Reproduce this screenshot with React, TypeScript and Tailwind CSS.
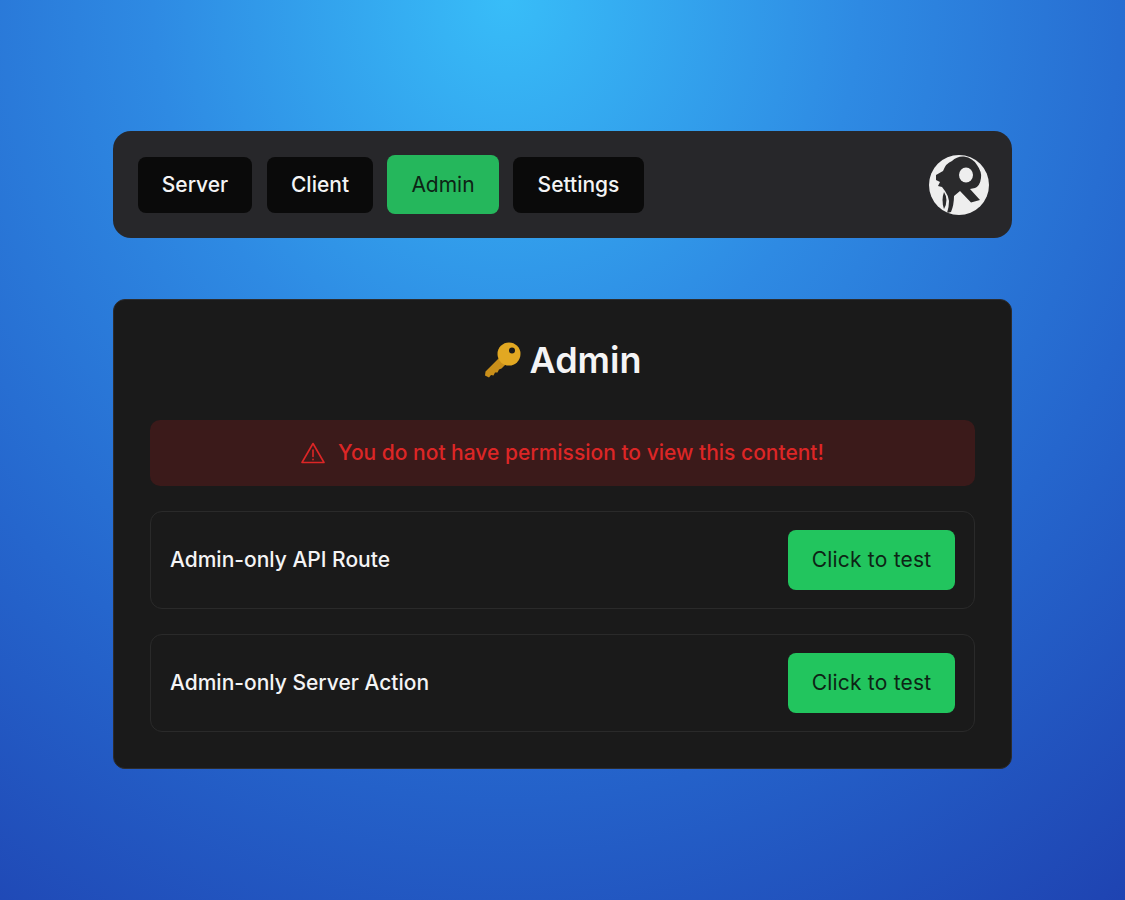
const font = { fontFamily: "Inter, 'Liberation Sans', sans-serif" };

function KeyIcon() {
  return (
    <svg width="38" height="38" viewBox="0 0 38 38" className="shrink-0">
      <path
        d="M17 15 L1.5 30.5 L1 34.5 L5 36.5 L7 34 L9.5 34.5 L11 31.5 L13.5 31.5 L15 28.5 L17.5 27.5 L24 21 Z"
        fill="#c98f1a"
      />
      <circle cx="25" cy="13" r="11.5" fill="#e2a822" />
      <circle cx="28" cy="9.5" r="3" fill="#1a1a1a" />
    </svg>
  );
}

function WarningIcon() {
  return (
    <svg width="24" height="22" viewBox="0 0 24 22" fill="none" stroke="#dc2626" strokeWidth="1.6" strokeLinejoin="round" strokeLinecap="round">
      <path d="M12 1.5 L23 20.5 L1 20.5 Z" />
      <path d="M12 8 L12 14.5" />
      <path d="M12 17.4 L12 17.7" />
    </svg>
  );
}

function Logo() {
  return (
    <div className="h-[60px] w-[60px] overflow-hidden rounded-full bg-[#eeeeee]">
      <svg width="60" height="60" viewBox="0 0 60 60">
        {/* lion head and mane forming the bowl of the R */}
        <path
          d="M7 20 L14 16 Q17 8 23 6 Q28 1 35 1.5 Q44 3 48 10 Q53 17 52 23 Q51 31 46 33 L41 34 L51 45 L42 47.5 L31 36 L25 41 Q25 50 22 57 L18 58 Q20 52 20 46 Q19 40 16 36 L13 32 L9 31 L11 27 L7 25 Z"
          fill="#2a2a2c"
        />
        <ellipse cx="37" cy="20" rx="7" ry="7.5" fill="#eeeeee" />
        <path d="M15 37 Q20 45 15 54 Q12 45 15 37 Z" fill="#2a2a2c" />
      </svg>
    </div>
  );
}

function NavButton({ label, className }: { label: string; className: string }) {
  return (
    <button className={`flex h-[56px] items-center justify-center rounded-lg bg-[#0a0a0a] text-[21px] font-medium text-[#f4f4f5] ${className}`}>
      {label}
    </button>
  );
}

function TestRow({ label }: { label: string }) {
  return (
    <div className="flex h-[98px] items-center justify-between rounded-xl border border-[#2a2a2a] px-[19px]">
      <span className="text-[21px] font-medium text-[#f4f4f5]">{label}</span>
      <button className="flex h-[60px] w-[167px] items-center justify-center rounded-lg bg-[#22c55e] text-[21px] tracking-[0.01em] text-[#0d2415]">
        Click to test
      </button>
    </div>
  );
}

export default function App() {
  return (
    <div
      style={font}
      className="flex h-[900px] w-full flex-col items-center overflow-hidden bg-[radial-gradient(ellipse_85%_115%_at_45%_0%,#38bdf8_0%,#2e8ae3_37%,#2566cd_72%,#1e40af_112%)] pt-[131px]"
    >
      {/* Nav */}
      <nav className="flex h-[107px] w-[899px] items-center justify-between rounded-[18px] bg-[#27272a] pl-[25px] pr-[23px]">
        <div className="flex items-center">
          <NavButton label="Server" className="w-[114px]" />
          <NavButton label="Client" className="ml-[15px] w-[106px]" />
          <button className="ml-[14px] flex h-[59px] w-[112px] items-center justify-center rounded-lg bg-[#25b75c] text-[21px] text-[#0d2415]">
            Admin
          </button>
          <NavButton label="Settings" className="ml-[14px] w-[131px]" />
        </div>
        <Logo />
      </nav>

      {/* Card */}
      <main className="mt-[61px] flex h-[470px] w-[899px] flex-col rounded-xl border border-[#2c2c2e] bg-[#1a1a1a] px-[36px]">
        <h1 className="mt-[40px] flex h-[40px] items-center justify-center gap-[8px] text-[36px] font-semibold text-[#f4f4f5]">
          <KeyIcon />
          Admin
        </h1>
        <div className="mt-[40px] flex h-[66px] items-center justify-center gap-[13px] rounded-[10px] bg-[#3b1a1a] text-[21px] font-medium text-[#dc2626]">
          <WarningIcon />
          You do not have permission to view this content!
        </div>
        <div className="mt-[25px] flex flex-col gap-[25px]">
          <TestRow label="Admin-only API Route" />
          <TestRow label="Admin-only Server Action" />
        </div>
      </main>
    </div>
  );
}
